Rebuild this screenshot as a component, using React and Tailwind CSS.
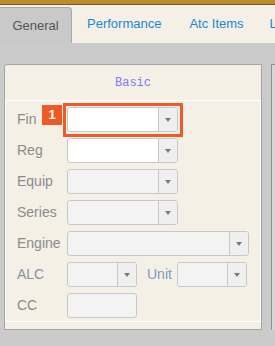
import React from 'react';

function Arrow() {
  return (
    <span className="w-0 h-0 border-x-[3px] border-x-transparent border-t-[4px] border-t-[#7a7a7a]" />
  );
}

function Combo({ width, disabled, button = true }) {
  return (
    <div
      className={`flex shrink-0 h-[25px] border border-[#c8c8c8] rounded-[3px] overflow-hidden ${width} ${
        disabled ? 'bg-[#f3f3f3]' : 'bg-white'
      }`}
    >
      <div className="flex-1" />
      {button && (
        <div className="w-[19px] border-l border-[#c8c8c8] bg-[#efefef] flex items-center justify-center">
          <Arrow />
        </div>
      )}
    </div>
  );
}

function Row({ label, children, labelClass = 'text-[#8b8b8b]' }) {
  return (
    <div className="flex items-center h-[25px]">
      <div className={`w-[50px] shrink-0 text-[14px] ${labelClass}`}>{label}</div>
      {children}
    </div>
  );
}

export default function App() {
  return (
    <div className="w-[275px] h-[346px] overflow-hidden bg-[#cbcbcb] font-['Liberation_Sans',Arial,sans-serif]">
      {/* top bar */}
      <div className="h-[4px] bg-[#bc8d2c]" />
      <div className="h-px bg-[#6f5b2c]" />

      {/* tabs */}
      <div className="h-[38px] bg-[#f4f0e6] flex items-end text-[13px] whitespace-nowrap overflow-hidden">
        <div className="h-[36px] w-[72px] shrink-0 flex items-center justify-center bg-[#c9c9c9] border-t border-r border-[#a9a9a9] rounded-tr-[4px] text-[#555]">
          General
        </div>
        <div className="h-full shrink-0 flex items-center pl-[15px] pr-[14px] text-[#1a87d5]">Performance</div>
        <div className="h-full shrink-0 flex items-center px-[14px] text-[#1a87d5]">Atc Items</div>
        <div className="h-full shrink-0 flex items-center pl-[12px] text-[#1a87d5]">Load</div>
      </div>

      {/* content */}
      <div className="flex pt-[21px] pl-[4px] gap-[9px]">
        <div className="w-[258px] h-[266px] shrink-0 border border-[#a4a4a4] rounded-tl-[3px] bg-[#f4f0e6] flex flex-col">
          <div className="h-[35px] flex items-center justify-center font-['Liberation_Mono',monospace] text-[12px] text-[#7f7bff]">
            Basic
          </div>
          <div className="h-[222px] border border-white pt-[6px] pl-[11px] flex flex-col gap-[6px]">
            <Row label="Fin">
              <div className="relative">
                <Combo width="w-[111px]" />
                <div className="absolute left-[-4px] top-[-4px] w-[120px] h-[34px] border-[3px] border-[#ef5a28]" />
                <div className="absolute left-[-25px] top-[-2px] w-[20px] h-[20px] bg-[#ee5a24] text-white text-[13px] font-bold flex items-center justify-center">
                  1
                </div>
              </div>
            </Row>
            <Row label="Reg">
              <Combo width="w-[111px]" />
            </Row>
            <Row label="Equip">
              <Combo width="w-[111px]" disabled />
            </Row>
            <Row label="Series">
              <Combo width="w-[111px]" disabled />
            </Row>
            <Row label="Engine">
              <Combo width="w-[182px]" disabled />
            </Row>
            <Row label="ALC" labelClass="text-[#8a92a2]">
              <Combo width="w-[70px]" disabled />
              <div className="w-[40px] shrink-0 pl-[10px] text-[14px] text-[#7f9bc2]">Unit</div>
              <Combo width="w-[70px]" disabled />
            </Row>
            <Row label="CC">
              <Combo width="w-[70px]" disabled button={false} />
            </Row>
          </div>
        </div>
        <div className="flex-1 h-[266px] border-l border-t border-[#8f8f8f] bg-[#d6d6d6]" />
      </div>
    </div>
  );
}
